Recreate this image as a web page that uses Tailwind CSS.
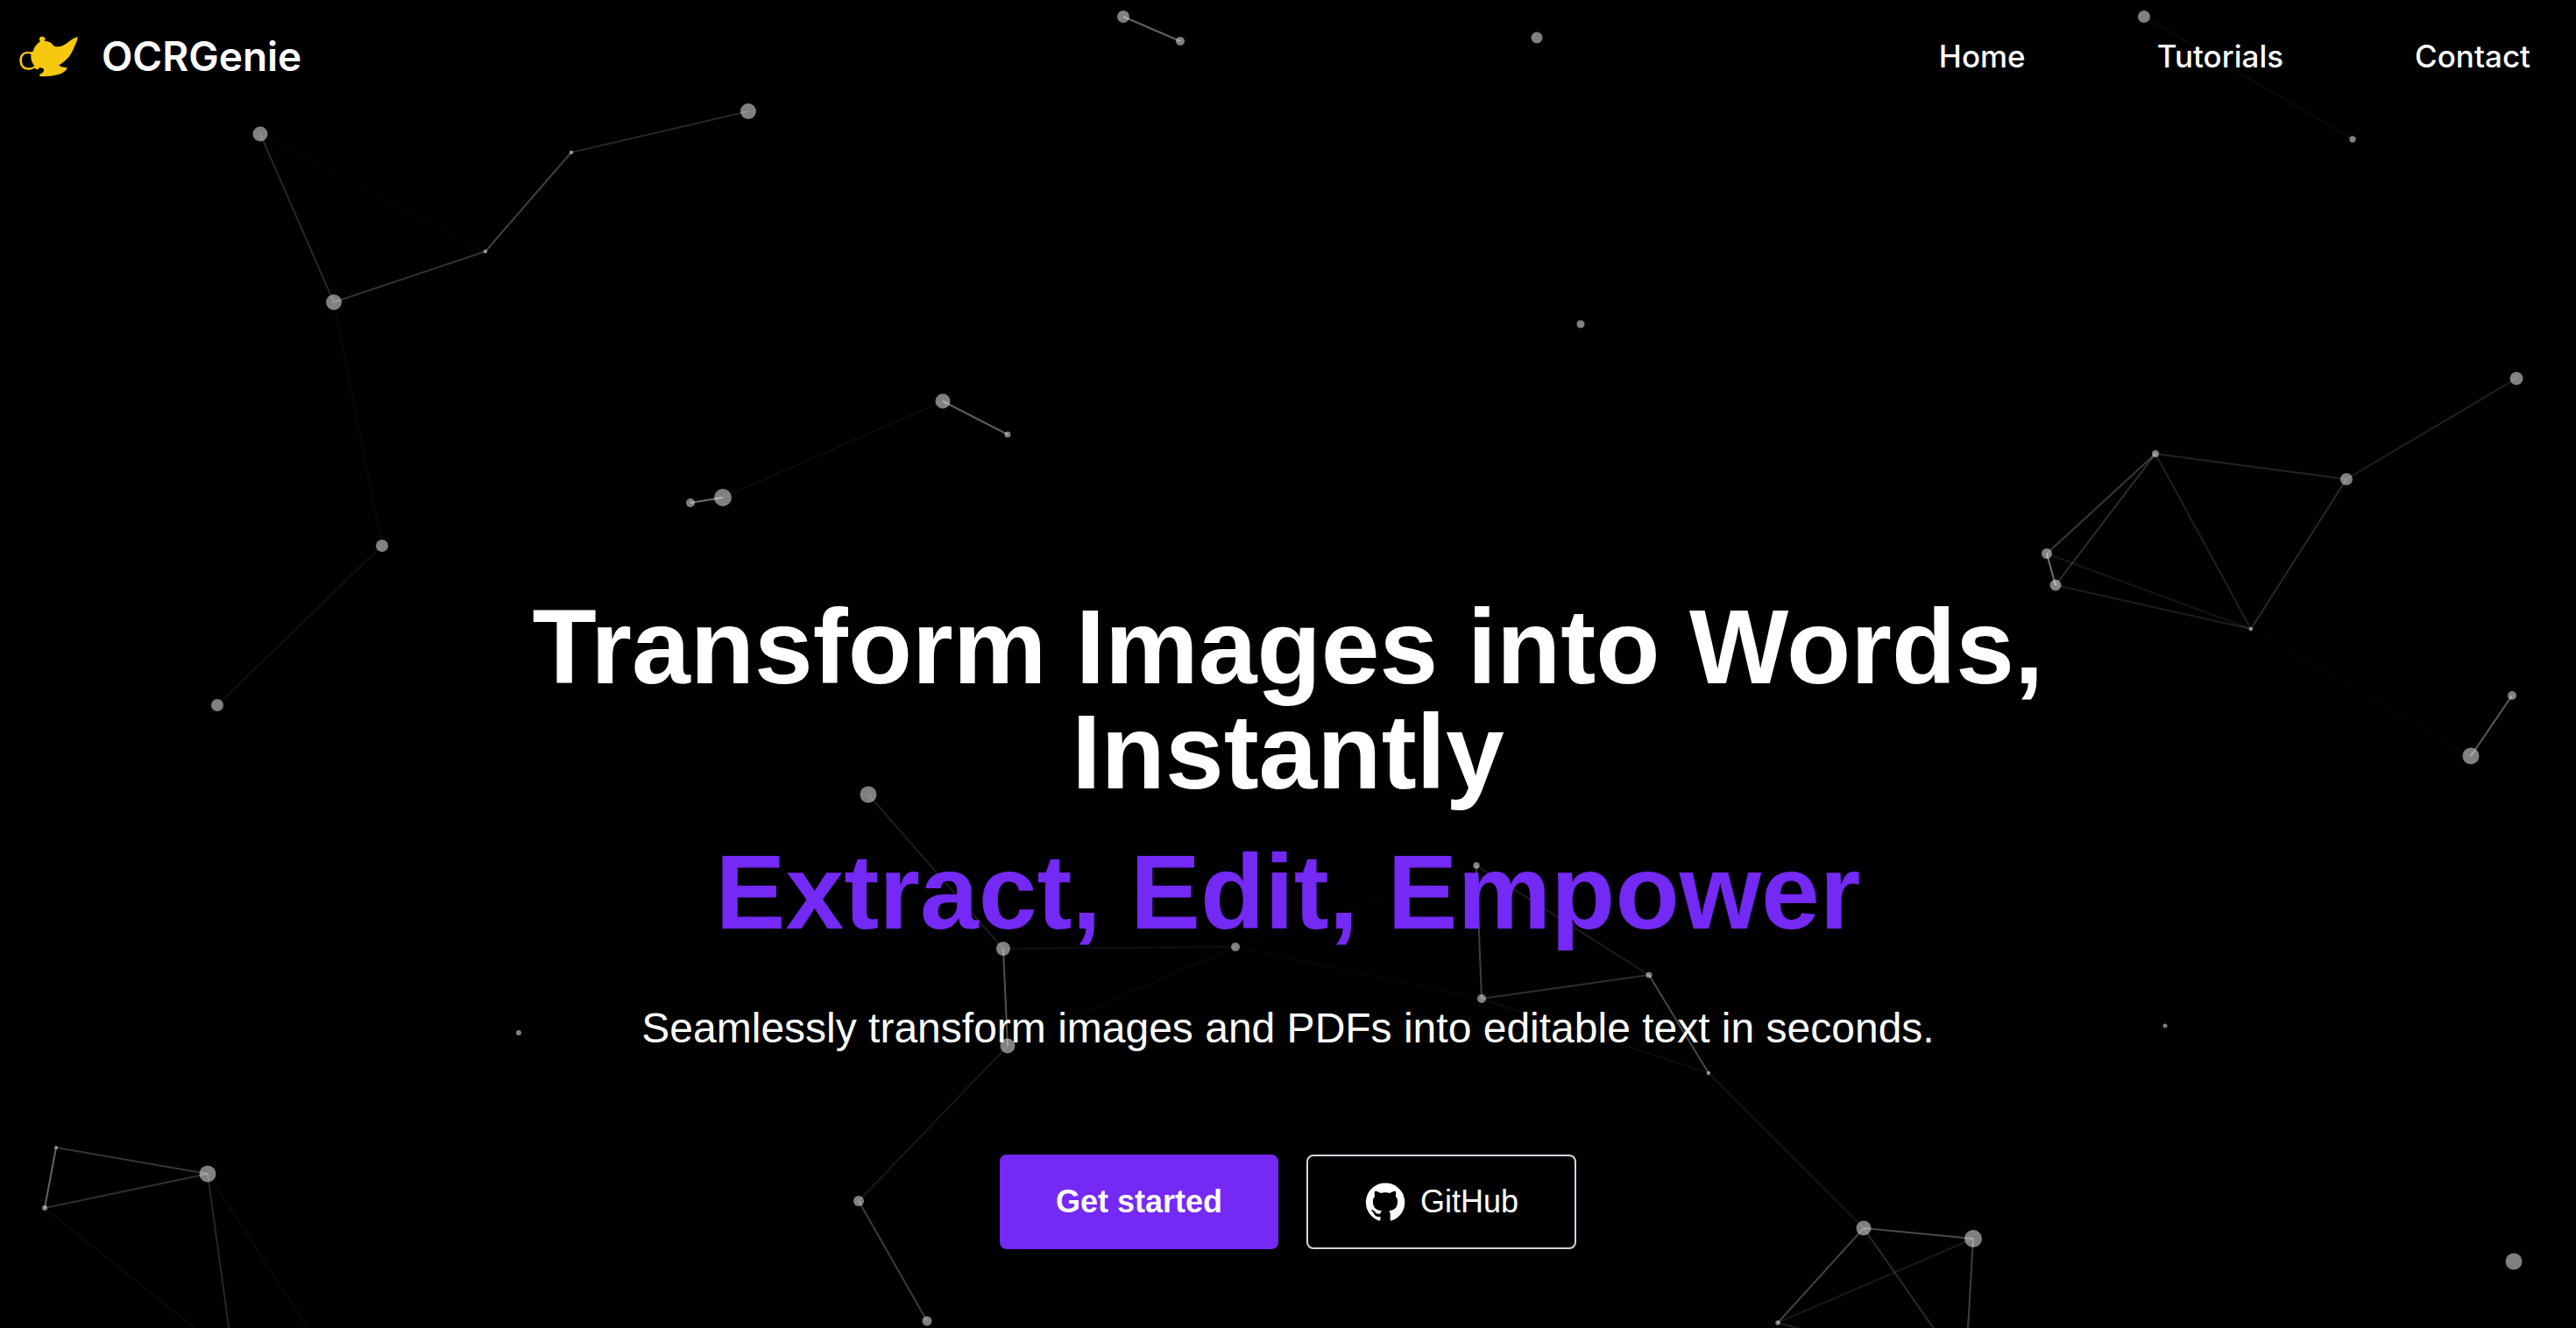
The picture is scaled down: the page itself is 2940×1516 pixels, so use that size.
<!DOCTYPE html>
<html lang="en">
<head>
<meta charset="utf-8">
<meta name="viewport" content="width=device-width, initial-scale=1">
<title>OCRGenie</title>
<script src="https://cdn.jsdelivr.net/npm/@tailwindcss/browser@4"></script>
</head>
<body class="bg-black text-white">
<div class="relative isolate flex min-h-screen flex-col overflow-hidden font-['Liberation_Sans',Arial,sans-serif]">
  <svg id="particles" class="absolute inset-0 -z-10 h-full w-full" viewBox="0 0 2940 1516" preserveAspectRatio="xMidYMid slice" aria-hidden="true"></svg>

  <header class="flex h-32 items-center justify-between pr-13 pl-[22px] font-[Inter,sans-serif]">
    <a href="#" class="flex items-center gap-[27px] text-[46px] leading-[56px] font-semibold">
      <svg class="h-[47px] w-[67px]" viewBox="37 30 201 141" fill="#f6c90e" aria-hidden="true">
        <path fill-rule="evenodd" d="M109 49C103 43 105 32 115 32C125 32 129 41 123 48C138 48 148 54 153 62C158 68 168 68 180 65C198 60 210 46 222 39L237 32L235 46C226 64 222 82 209 99C198 113 185 123 172 131C180 136 190 138 201 138C199 150 185 158 168 163C149 168 128 170 107 168C104 163 110 160 115 157C121 153 123 148 119 141C114 141 110 137 107 138C104 142 102 147 96 144C92 143 90 139 87 141C81 145 73 147 65 146C48 145 38 131 38 114C38 97 48 85 63 84C72 83 79 88 85 82C89 65 98 57 109 49ZM65 91C53 90 46 101 46 113C46 127 53 138 66 139C76 139 84 138 89 132C82 124 78 115 77 104C77 98 78 94 76 92C73 91 69 91 65 91Z"/>
      </svg>
      OCRGenie
    </a>
    <nav class="flex items-center gap-[150px] text-[35px] leading-10 font-medium" aria-label="Main">
      <a href="#">Home</a>
      <a href="#">Tutorials</a>
      <a href="#">Contact</a>
    </nav>
  </header>

  <main class="flex flex-1 flex-col items-center justify-end px-8 pb-[90px] text-center">
    <h1 class="flex max-w-[1792px] flex-col gap-10 text-[120px] leading-[120px] font-bold">
      <span>Transform Images into Words, Instantly</span>
      <span class="text-[#7429f5]">Extract, Edit, Empower</span>
    </h1>
    <p class="mt-15 text-[48px] leading-[72px]">Seamlessly transform images and PDFs into editable text in seconds.</p>
    <div class="mt-27 flex gap-8 text-[36px] leading-[44px]">
      <button type="button" class="h-27 rounded-lg bg-[#7429f5] px-16 font-bold text-gray-50">Get started</button>
      <a href="#" class="flex h-27 items-center gap-4 rounded-lg border-2 border-gray-300 px-16">
        <svg class="size-12" viewBox="0 0 24 24" fill="currentColor" aria-hidden="true"><path d="M12 1.27a11 11 0 0 0-3.48 21.46c.55.09.73-.28.73-.55v-1.84c-3.03.64-3.67-1.46-3.67-1.46-.55-1.29-1.28-1.65-1.28-1.65-.92-.65.1-.65.1-.65 1.1 0 1.73 1.1 1.73 1.1.92 1.65 2.57 1.2 3.21.92a2 2 0 0 1 .64-1.47c-2.47-.27-5.04-1.19-5.04-5.5 0-1.1.46-2.1 1.2-2.84a3.76 3.76 0 0 1 0-2.93s.91-.28 3.11 1.1c1.8-.49 3.7-.49 5.5 0 2.1-1.38 3.02-1.1 3.02-1.1a3.76 3.76 0 0 1 .1 2.93c.73.74 1.19 1.74 1.19 2.84 0 4.31-2.58 5.23-5.04 5.5.45.37.82.92.82 2.02v3.03c0 .27.1.64.73.55A11 11 0 0 0 12 1.27"/></svg>
        GitHub
      </a>
    </div>
  </main>
</div>
<script>
  // Particle positions as [x, y, radius]; any two closer than LINK are joined, fading with distance.
  const LINK = 300;
  const dots = [
    [297,153,8.5],[381,345,9],[554,287,2.3],[652,174,2.3],[854,127,9],[1076,458,8.5],[1150,496,3.5],
    [825,568,10],[788,574,5],[436,623,7],[248,805,7],[1282,19,7],[1347,47,5],[1754,43,6.5],[1804,370,4.5],
    [2447,19,7],[2685,159,3.7],[2872,432,7.5],[2678,547,7],[2460,518,4],[2336,632,6],[2346,668,6.5],
    [2569,718,2.3],[2867,794,5],[2820,863,9.5],[64,1310,2],[51,1379,3],[237,1340,9.5],[266,1551,4],[390,1575,4],
    [991,907,9.5],[1145,1083,8],[1410,1081,5],[1150,1194,8.5],[980,1371,6],[1058,1508,5.5],
    [1685,988,3.7],[1882,1113,3.5],[1691,1140,5],[1950,1225,2.3],[2127,1402,8.5],[2252,1414,10],[2029,1510,2.7],
    [2243,1568,5],[592,1179,3],[2471,1171,2.5],[2869,1440,9.5]
  ];
  let shapes = dots.map(([x, y, r]) => `<circle cx="${x}" cy="${y}" r="${r}" fill="#fff" fill-opacity="0.5"/>`).join("");
  dots.forEach(([x1, y1], i) => dots.slice(i + 1).forEach(([x2, y2]) => {
    const d = Math.hypot(x2 - x1, y2 - y1);
    if (d < LINK) shapes += `<line x1="${x1}" y1="${y1}" x2="${x2}" y2="${y2}" stroke="#fff" stroke-width="2" stroke-opacity="${0.5 * (1 - d / LINK)}"/>`;
  }));
  document.getElementById("particles").innerHTML = shapes;
</script>
</body>
</html>
